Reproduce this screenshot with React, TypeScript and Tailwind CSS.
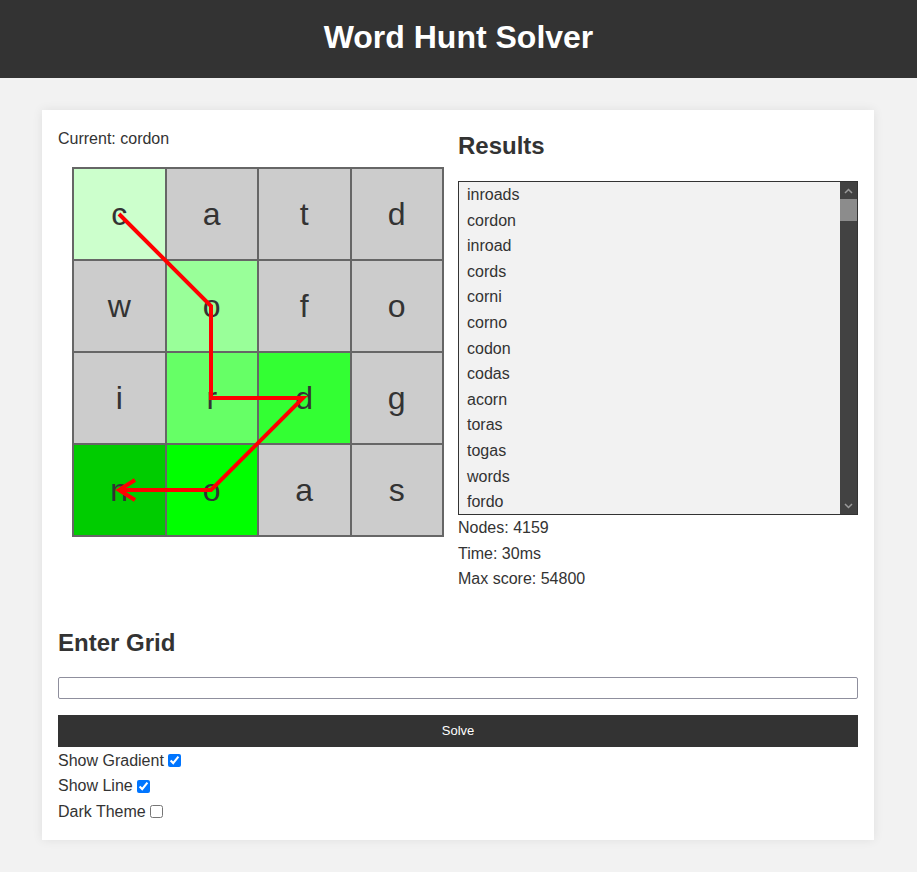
import React from "react";

const grid = [
  ["c", "a", "t", "d"],
  ["w", "o", "f", "o"],
  ["i", "r", "d", "g"],
  ["n", "o", "a", "s"],
];

// colours of the cells on the current path, keyed "row-col"
const pathColors: Record<string, string> = {
  "0-0": "#ccffcc",
  "1-1": "#99ff99",
  "2-1": "#66ff66",
  "2-2": "#33ff33",
  "3-1": "#00ff00",
  "3-0": "#00cc00",
};

const path: Array<[number, number]> = [
  [0, 0],
  [1, 1],
  [2, 1],
  [2, 2],
  [3, 1],
  [3, 0],
];

const results = [
  "inroads", "cordon", "inroad", "cords", "corni", "corno", "codon",
  "codas", "acorn", "toras", "togas", "words", "fordo",
];

const center = (n: number) => 47 + n * 92;

function Board() {
  const pts = path.map(([r, c]) => `${center(c)},${center(r)}`).join(" ");
  const [er, ec] = path[path.length - 1];
  const ex = center(ec);
  const ey = center(er);
  return (
    <div className="relative ml-[14px] mt-[15px] w-[372px]">
      <div className="grid grid-cols-[repeat(4,90.5px)] gap-[2px] border-2 border-[#666] bg-[#666]">
        {grid.map((row, r) =>
          row.map((ch, c) => (
            <div
              key={`${r}-${c}`}
              className="flex h-[90px] items-center justify-center text-[32px] text-[#333]"
              style={{ backgroundColor: pathColors[`${r}-${c}`] ?? "#cccccc" }}
            >
              {ch}
            </div>
          )),
        )}
      </div>
      <svg className="pointer-events-none absolute left-0 top-0" width="372" height="372">
        <polyline points={pts} fill="none" stroke="#ff0000" strokeWidth="4" strokeLinejoin="miter" />
        <polyline
          points={`${ex + 16},${ey - 10} ${ex},${ey} ${ex + 16},${ey + 10}`}
          fill="none"
          stroke="#ff0000"
          strokeWidth="4"
        />
      </svg>
    </div>
  );
}

function ResultList() {
  return (
    <div className="flex h-[334px] border border-[#333] bg-[#f2f2f2]">
      <div className="flex-1 overflow-hidden">
        {results.map((w) => (
          <div key={w} className="pl-2 leading-[25.6px]">{w}</div>
        ))}
      </div>
      <div className="flex w-[17px] flex-col bg-[#424242]">
        <div className="flex h-[17px] items-center justify-center text-[#9a9a9a]">
          <svg width="9" height="6" viewBox="0 0 9 6">
            <path d="M1 5 L4.5 1.5 L8 5" fill="none" stroke="currentColor" strokeWidth="1.5" />
          </svg>
        </div>
        <div className="h-[22px] bg-[#8c8c8c]" />
        <div className="flex-1" />
        <div className="flex h-[17px] items-center justify-center text-[#9a9a9a]">
          <svg width="9" height="6" viewBox="0 0 9 6">
            <path d="M1 1 L4.5 4.5 L8 1" fill="none" stroke="currentColor" strokeWidth="1.5" />
          </svg>
        </div>
      </div>
    </div>
  );
}

export default function App() {
  return (
    <div className="min-h-[872px] bg-[#f2f2f2] pb-[32px] font-['Liberation_Sans',Arial,sans-serif] text-[16px] text-[#333]">
      <header className="flex h-[78px] items-center justify-center bg-[#333] pb-1">
        <h1 className="text-[32px] font-bold text-white">Word Hunt Solver</h1>
      </header>

      <main className="ml-[42px] mt-[32px] w-[832px] bg-white px-4 pb-[15px] pt-4 shadow-[0_0_10px_rgba(0,0,0,0.08)]">
        <div className="flex gap-4">
          <div className="w-[384px]">
            <div className="leading-[25.6px]">Current: cordon</div>
            <Board />
          </div>
          <div className="flex-1">
            <h2 className="mb-4 h-[39px] text-[24px] font-bold leading-[39px]">Results</h2>
            <ResultList />
            <div className="leading-[25.6px]">
              <div>Nodes: 4159</div>
              <div>Time: 30ms</div>
              <div>Max score: 54800</div>
            </div>
          </div>
        </div>

        <h2 className="mt-[32px] h-[38px] text-[24px] font-bold leading-[38px]">Enter Grid</h2>
        <input
          type="text"
          className="mt-[15px] block h-[22px] w-full rounded-[2px] border border-[#8f8f9d] bg-white px-1 text-[13px]"
        />
        <button className="mt-4 block h-[32px] w-full bg-[#333] text-[13px] text-white">Solve</button>
        <div className="mt-[1px] leading-[25.6px]">
          <label className="flex items-center">
            Show Gradient
            <input type="checkbox" defaultChecked className="ml-1 h-[13px] w-[13px]" />
          </label>
          <label className="flex items-center">
            Show Line
            <input type="checkbox" defaultChecked className="ml-1 h-[13px] w-[13px]" />
          </label>
          <label className="flex items-center">
            Dark Theme
            <input type="checkbox" className="ml-1 h-[13px] w-[13px]" />
          </label>
        </div>
      </main>
    </div>
  );
}
